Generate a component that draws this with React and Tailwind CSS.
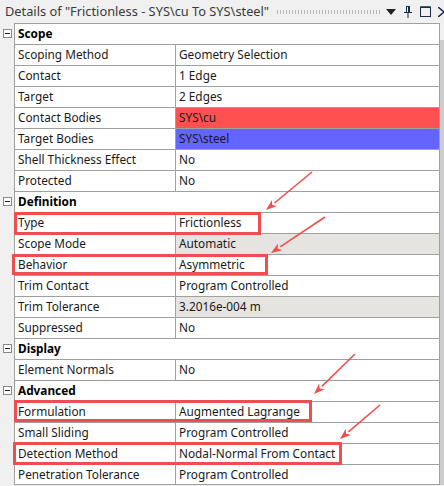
import React from 'react';

const sections = [
  {
    title: 'Scope',
    rows: [
      { label: 'Scoping Method', value: 'Geometry Selection' },
      { label: 'Contact', value: '1 Edge' },
      { label: 'Target', value: '2 Edges' },
      { label: 'Contact Bodies', value: 'SYS\\cu', bg: 'bg-[#ff5050]' },
      { label: 'Target Bodies', value: 'SYS\\steel', bg: 'bg-[#6464ff]' },
      { label: 'Shell Thickness Effect', value: 'No' },
      { label: 'Protected', value: 'No' },
    ],
  },
  {
    title: 'Definition',
    rows: [
      { label: 'Type', value: 'Frictionless' },
      { label: 'Scope Mode', value: 'Automatic', bg: 'bg-[#e6e4e0]' },
      { label: 'Behavior', value: 'Asymmetric' },
      { label: 'Trim Contact', value: 'Program Controlled' },
      { label: 'Trim Tolerance', value: '3.2016e-004 m', bg: 'bg-[#e6e4e0]' },
      { label: 'Suppressed', value: 'No' },
    ],
  },
  {
    title: 'Display',
    rows: [{ label: 'Element Normals', value: 'No' }],
  },
  {
    title: 'Advanced',
    rows: [
      { label: 'Formulation', value: 'Augmented Lagrange' },
      { label: 'Small Sliding', value: 'Program Controlled' },
      { label: 'Detection Method', value: 'Nodal-Normal From Contact' },
      { label: 'Penetration Tolerance', value: 'Program Controlled' },
    ],
  },
];

// highlight boxes and arrows drawn on top of the grid
const boxes = [
  { x: 14, y: 212, w: 247, h: 23 },
  { x: 12, y: 254, w: 256, h: 21 },
  { x: 14, y: 400, w: 298, h: 22 },
  { x: 13, y: 442, w: 329, h: 23 },
];

const arrows = [
  { x1: 312, y1: 172, x2: 266, y2: 210 },
  { x1: 325, y1: 217, x2: 271, y2: 253 },
  { x1: 355, y1: 354, x2: 314, y2: 394 },
  { x1: 380, y1: 405, x2: 340, y2: 439 },
];

const MinusBox = () => (
  <div className="w-[9px] h-[9px] border border-[#8a8a8a] bg-white flex items-center justify-center">
    <div className="w-[5px] h-px bg-[#222]" />
  </div>
);

const HeaderRow = ({ title }) => (
  <div className="flex h-[21px]">
    <div className="w-[14px] flex items-center justify-center pl-[1px]">
      <MinusBox />
    </div>
    <div className="flex-1 border-t border-l border-r border-[#a0a0a0] bg-white flex items-center pl-[3px] font-bold text-black">
      {title}
    </div>
  </div>
);

const PropRow = ({ label, value, bg, last }) => (
  <div className="flex h-[21px]">
    <div className="w-[14px]" />
    <div
      className={`flex-1 flex border-t border-l border-r border-[#a0a0a0] bg-white ${last ? 'border-b' : ''}`}
    >
      <div className="w-[161px] border-r border-[#a0a0a0] flex items-center pl-[3px]">{label}</div>
      <div className={`flex-1 flex items-center pl-[3px] ${bg || ''}`}>{value}</div>
    </div>
  </div>
);

const App = () => {
  const total = sections.length;
  return (
    <div
      className="relative w-[444px] h-[486px] overflow-hidden bg-[#f0f0f0] text-[11.8px] text-[#1a1a1a] leading-none"
      style={{ fontFamily: '"Noto Sans", "Liberation Sans", sans-serif' }}
    >
      {/* title bar */}
      <div className="h-[23px] flex items-center pl-[5px] pr-0">
        <span className="text-[12.8px] text-[#3a3a3a] whitespace-nowrap">
          Details of "Frictionless - SYS\cu To SYS\steel"
        </span>
        <div className="flex-1 ml-[7px] mr-[6px] h-[4px] bg-[radial-gradient(circle,#b8b8b8_0.6px,transparent_0.8px)] bg-[length:3px_2px]" />
        <svg width="10" height="6" viewBox="0 0 10 6" className="mr-[8px]">
          <path d="M0 0 H10 L5 6 Z" fill="#222" />
        </svg>
        <svg width="8" height="13" viewBox="0 0 8 13" className="mr-[8px]">
          <path d="M2 1 H6 V7 H8 V8 H0 V7 H2 Z M3 2 V7 H4 V2 Z" fill="#1b2a4a" />
          <rect x="3.5" y="8" width="1" height="5" fill="#1b2a4a" />
        </svg>
        <svg width="11" height="11" viewBox="0 0 11 11" className="mr-[7px]">
          <rect x="0.5" y="1" width="10" height="9.5" fill="none" stroke="#1b2a4a" strokeWidth="1" />
          <rect x="0.5" y="0.5" width="10" height="1.5" fill="#1b2a4a" />
        </svg>
        <svg width="6" height="10" viewBox="0 0 6 10">
          <path d="M0 0 L6 5 M0 10 L6 5" stroke="#1b2a4a" strokeWidth="1.6" />
        </svg>
      </div>

      <div className="flex">
        <div className="w-[440px]">
          {sections.map((s, si) => (
            <React.Fragment key={s.title}>
              <HeaderRow title={s.title} />
              {s.rows.map((r, ri) => (
                <PropRow
                  key={r.label}
                  {...r}
                  last={si === total - 1 && ri === s.rows.length - 1}
                />
              ))}
            </React.Fragment>
          ))}
        </div>
        <div className="w-[4px] flex flex-col">
          <div className="h-[17px] bg-[#f0f0f0]" />
          <div className="flex-1 bg-[#cdcdcd]" />
        </div>
      </div>

      <svg className="absolute inset-0 pointer-events-none" width="444" height="486">
        {boxes.map((b, i) => (
          <rect
            key={i}
            x={b.x + 1.5}
            y={b.y + 1.5}
            width={b.w - 3}
            height={b.h - 3}
            fill="none"
            stroke="#f04e4e"
            strokeWidth="3"
          />
        ))}
        {arrows.map((a, i) => {
          const dx = a.x2 - a.x1;
          const dy = a.y2 - a.y1;
          const len = Math.hypot(dx, dy);
          const ux = dx / len;
          const uy = dy / len;
          const bx = a.x2 - ux * 11;
          const by = a.y2 - uy * 11;
          const px = -uy * 4;
          const py = ux * 4;
          return (
            <g key={i}>
              <line x1={a.x1} y1={a.y1} x2={bx} y2={by} stroke="#f04e4e" strokeWidth="1.6" />
              <path
                d={`M${a.x2} ${a.y2} L${bx + px} ${by + py} L${a.x2 - ux * 8} ${a.y2 - uy * 8} L${bx - px} ${by - py} Z`}
                fill="#f04e4e"
              />
            </g>
          );
        })}
      </svg>
    </div>
  );
};

export default App;
